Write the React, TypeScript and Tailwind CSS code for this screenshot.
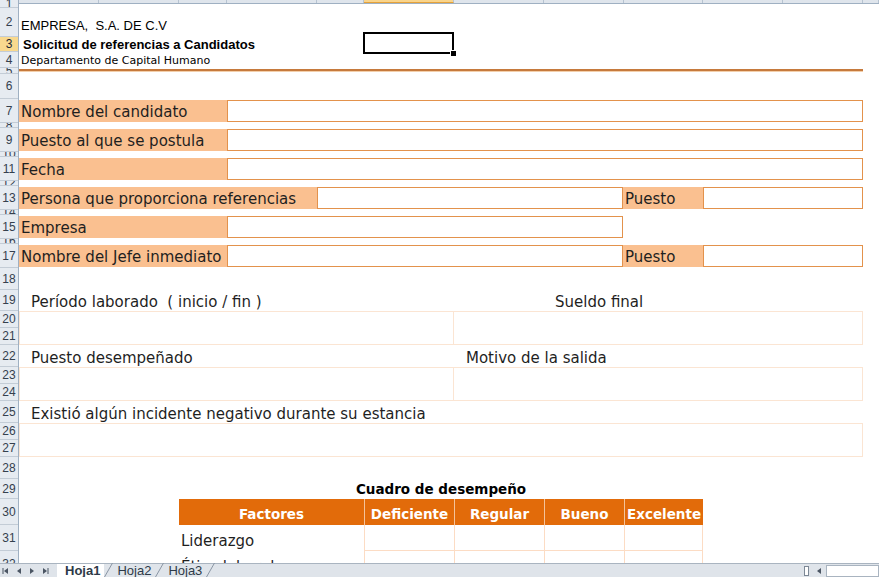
import React from "react";

const gothic = "font-['DejaVu_Sans',sans-serif]";
const arial = "font-['Liberation_Sans',Arial,sans-serif]";

// spreadsheet rows: number + height class
const rows: { n: number; h: string }[] = [
  { n: 1, h: "h-[8px]" },
  { n: 2, h: "h-[29px]" },
  { n: 3, h: "h-[15px]" },
  { n: 4, h: "h-[16px]" },
  { n: 5, h: "h-[6px]" },
  { n: 6, h: "h-[25px]" },
  { n: 7, h: "h-[24px]" },
  { n: 8, h: "h-[5px]" },
  { n: 9, h: "h-[24px]" },
  { n: 10, h: "h-[5px]" },
  { n: 11, h: "h-[24px]" },
  { n: 12, h: "h-[5px]" },
  { n: 13, h: "h-[24px]" },
  { n: 14, h: "h-[5px]" },
  { n: 15, h: "h-[24px]" },
  { n: 16, h: "h-[5px]" },
  { n: 17, h: "h-[24px]" },
  { n: 18, h: "h-[22px]" },
  { n: 19, h: "h-[21px]" },
  { n: 20, h: "h-[17px]" },
  { n: 21, h: "h-[17px]" },
  { n: 22, h: "h-[22px]" },
  { n: 23, h: "h-[17px]" },
  { n: 24, h: "h-[17px]" },
  { n: 25, h: "h-[22px]" },
  { n: 26, h: "h-[17px]" },
  { n: 27, h: "h-[17px]" },
  { n: 28, h: "h-[22px]" },
  { n: 29, h: "h-[20px]" },
  { n: 30, h: "h-[26px]" },
  { n: 31, h: "h-[26px]" },
  { n: 32, h: "h-[26px]" },
];

const cols = [
  { w: "w-[80px]" },
  { w: "w-[80px]" },
  { w: "w-[48px]" },
  { w: "w-[90px]" },
  { w: "w-[47px]" },
  { w: "w-[90px]", sel: true },
  { w: "w-[90px]" },
  { w: "w-[80px]" },
  { w: "w-[79px]" },
  { w: "w-[80px]" },
  { w: "w-[80px]" },
  { w: "w-[16px]" },
];

function Label({ text, w }: { text: string; w: string }) {
  return (
    <div className={`${w} h-full bg-[#fac090] flex items-center pl-[2px] pt-[2px] overflow-hidden whitespace-nowrap`}>
      {text}
    </div>
  );
}

function Box({ w }: { w: string }) {
  return <div className={`${w} h-full border border-[#e3924c] bg-white`} />;
}

function Gap({ h }: { h: string }) {
  return <div className={`${h} shrink-0`} />;
}

function FormRow({ children }: { children: React.ReactNode }) {
  return <div className="flex h-[24px] shrink-0 py-px">{children}</div>;
}

function AnswerBox({ split }: { split?: boolean }) {
  return (
    <div className="flex h-[34px] shrink-0 w-[844px] border border-[#fbe5d3]">
      {split && <div className="w-[434px] h-full border-r border-[#fbe5d3]" />}
    </div>
  );
}

function TableRow({ name }: { name: string }) {
  return (
    <div className="flex h-[26px] shrink-0 pl-[160px]">
      <div className="w-[185px] flex items-center pl-[2px] pt-[6px] whitespace-nowrap">{name}</div>
      <div className="w-[90px] border-l border-b border-[#fcdcc4]" />
      <div className="w-[90px] border-l border-b border-[#fcdcc4]" />
      <div className="w-[80px] border-l border-b border-[#fcdcc4]" />
      <div className="w-[79px] border-l border-r border-b border-[#fcdcc4]" />
    </div>
  );
}

function Tri({ dir, bar }: { dir: "l" | "r"; bar?: boolean }) {
  return (
    <svg width="8" height="8" viewBox="0 0 8 8" className="text-[#4b5563]">
      {dir === "l" ? (
        <path d="M6 1 L2 4 L6 7 Z" fill="currentColor" />
      ) : (
        <path d="M2 1 L6 4 L2 7 Z" fill="currentColor" />
      )}
      {bar && dir === "l" && <rect x="0.5" y="1" width="1" height="6" fill="currentColor" />}
      {bar && dir === "r" && <rect x="6.5" y="1" width="1" height="6" fill="currentColor" />}
    </svg>
  );
}

function Slant() {
  return (
    <svg width="9" height="14" viewBox="0 0 9 14" className="shrink-0">
      <path d="M0.5 14 L8.5 0" stroke="#8a96a4" strokeWidth="1" fill="none" />
    </svg>
  );
}

function TabBar() {
  return (
    <div className={`${arial} h-[14px] shrink-0 flex items-center bg-[#dfe4ea] border-t border-[#a9b4c0] text-[13px] leading-none text-[#2e3a48]`}>
      <div className="flex items-center gap-[5px] pl-[2px] w-[57px]">
        <Tri dir="l" bar />
        <Tri dir="l" />
        <Tri dir="r" />
        <Tri dir="r" bar />
      </div>
      <div className="flex items-end h-full">
        <div className="h-full bg-white flex items-center pl-[8px] pr-[4px] font-bold">Hoja1</div>
        <Slant />
        <div className="h-full flex items-center px-[4px]">Hoja2</div>
        <Slant />
        <div className="h-full flex items-center px-[4px]">Hoja3</div>
        <Slant />
      </div>
      <div className="flex-1" />
      <div className="flex items-center h-full">
        <div className="w-[5px] h-[10px] border border-[#7d8896] bg-white mr-[6px]" />
        <Tri dir="l" />
        <div className="w-[53px] h-[12px] ml-[3px] bg-white border border-[#a9b4c0]" />
      </div>
    </div>
  );
}

export default function App() {
  return (
    <div className="w-[879px] h-[577px] overflow-hidden bg-white flex flex-col text-[#1f1f1f]">
      <div className="flex h-[563px] shrink-0 overflow-hidden">
        {/* row headers */}
        <div className={`${arial} w-[19px] shrink-0 flex flex-col bg-[#e6ebf1] border-r border-[#9fb0c2]`}>
          {rows.map((r) => (
            <div
              key={r.n}
              className={`${r.h} shrink-0 flex items-center justify-center overflow-hidden border-b border-[#c3ccd6] text-[12px] leading-none ${
                r.n === 3 ? "bg-[#f9d98e] text-[#1e2a38]" : "text-[#34404e]"
              }`}
            >
              {r.n}
            </div>
          ))}
        </div>

        {/* sheet */}
        <div className={`${gothic} w-[860px] shrink-0 flex flex-col text-[15px] leading-none`}>
          {/* row 1 with column header strip */}
          <div className="h-[8px] shrink-0">
            <div className="flex h-[4px] bg-[#dfe5ec] border-b border-[#9fb0c2]">
              {cols.map((c, i) => (
                <div key={i} className={`${c.w} h-full border-r border-[#b6c3d1] ${c.sel ? "bg-[#f9d48b] border-b border-b-[#e5a23a]" : ""}`} />
              ))}
            </div>
          </div>

          {/* rows 2-4 title */}
          <div className={`${arial} h-[29px] shrink-0 flex items-end pl-[2px] pb-[5px] text-[13px] text-black`}>EMPRESA,&nbsp; S.A. DE C.V</div>
          <div className="relative h-[15px] shrink-0">
            <div className={`${arial} h-full flex items-center pl-[4px] text-[13px] font-bold text-black`}>Solicitud de referencias a Candidatos</div>
            <div className="absolute left-[344px] top-[-5px] w-[91px] h-[22px] border-2 border-black">
              <div className="absolute right-[-5px] bottom-[-5px] w-[7px] h-[7px] bg-black border border-white" />
            </div>
          </div>
          <div className="h-[16px] shrink-0 flex items-center pl-[2px] text-[11px] text-black">Departamento de Capital Humano</div>
          <div className="h-[6px] shrink-0 pt-px">
            <div className="w-[844px] h-[2px] bg-[#c67a3d]" />
            <div className="w-[844px] h-px bg-[#f3cfab]" />
          </div>
          <Gap h="h-[25px]" />

          {/* candidate form */}
          <FormRow>
            <Label text="Nombre del candidato" w="w-[208px]" />
            <Box w="w-[636px]" />
          </FormRow>
          <Gap h="h-[5px]" />
          <FormRow>
            <Label text="Puesto al que se postula" w="w-[208px]" />
            <Box w="w-[636px]" />
          </FormRow>
          <Gap h="h-[5px]" />
          <FormRow>
            <Label text="Fecha" w="w-[208px]" />
            <Box w="w-[636px]" />
          </FormRow>
          <Gap h="h-[5px]" />
          <FormRow>
            <Label text="Persona que proporciona referencias" w="w-[298px]" />
            <Box w="w-[306px]" />
            <Label text="Puesto" w="w-[80px]" />
            <Box w="w-[160px]" />
          </FormRow>
          <Gap h="h-[5px]" />
          <FormRow>
            <Label text="Empresa" w="w-[208px]" />
            <Box w="w-[396px]" />
          </FormRow>
          <Gap h="h-[5px]" />
          <FormRow>
            <Label text="Nombre del Jefe inmediato" w="w-[208px]" />
            <Box w="w-[396px]" />
            <Label text="Puesto" w="w-[80px]" />
            <Box w="w-[160px]" />
          </FormRow>
          <Gap h="h-[22px]" />

          {/* reference details */}
          <div className="flex items-center h-[21px] shrink-0 pt-[4px] whitespace-nowrap">
            <div className="w-[435px] pl-[12px]">Período laborado&nbsp; ( inicio / fin )</div>
            <div className="pl-[101px]">Sueldo final</div>
          </div>
          <AnswerBox split />
          <div className="flex items-center h-[22px] shrink-0 pt-[4px] whitespace-nowrap">
            <div className="w-[435px] pl-[12px]">Puesto desempeñado</div>
            <div className="pl-[12px]">Motivo de la salida</div>
          </div>
          <AnswerBox split />
          <div className="flex items-center h-[22px] shrink-0 pt-[4px] pl-[12px] whitespace-nowrap">Existió algún incidente negativo durante su estancia</div>
          <AnswerBox />
          <Gap h="h-[22px]" />

          {/* performance table */}
          <div className="h-[20px] shrink-0 flex items-center pt-[2px] pl-[160px]">
            <div className="w-[524px] text-center font-bold text-[13.5px] text-black">Cuadro de desempeño</div>
          </div>
          <div className="flex h-[26px] shrink-0 pl-[160px] font-bold text-[13.5px] text-white">
            <div className="w-[185px] bg-[#e26b0a] flex items-center justify-center pt-[6px]">Factores</div>
            <div className="w-[90px] bg-[#e26b0a] border-l border-[#f4c39a] flex items-center justify-center pt-[6px]">Deficiente</div>
            <div className="w-[90px] bg-[#e26b0a] border-l border-[#f4c39a] flex items-center justify-center pt-[6px]">Regular</div>
            <div className="w-[80px] bg-[#e26b0a] border-l border-[#f4c39a] flex items-center justify-center pt-[6px]">Bueno</div>
            <div className="w-[79px] bg-[#e26b0a] border-l border-[#f4c39a] flex items-center justify-center pt-[6px]">Excelente</div>
          </div>
          <TableRow name="Liderazgo" />
          <TableRow name="Ética laboral" />
        </div>
      </div>
      <TabBar />
    </div>
  );
}
